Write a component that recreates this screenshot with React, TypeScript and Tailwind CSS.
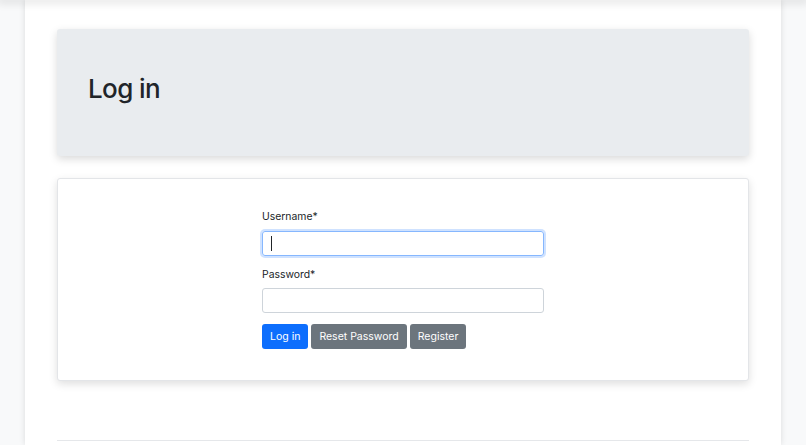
const font = { fontFamily: "Inter, 'Noto Sans', sans-serif" };

export default function App() {
  return (
    <div className="min-h-[445px] bg-[#f8f9fa] relative overflow-hidden" style={font}>
      {/* shadow of the navbar above the fold */}
      <div className="absolute top-0 left-0 right-0 h-0 shadow-[0_0_8px_3px_rgba(0,0,0,0.12)] z-10" />

      <div className="mx-[25px] min-h-[445px] bg-white shadow-[0_0_6px_rgba(0,0,0,0.12)] px-[32px] pt-[29px]">
        <div className="h-[127px] bg-[#e9ecef] rounded-[3px] shadow-[0_3px_8px_rgba(0,0,0,0.15)] flex items-center px-[31px] pb-[8px]">
          <h1 className="text-[26px] font-medium text-[#212529] tracking-[-0.6px] leading-none">Log in</h1>
        </div>

        <div className="mt-[22px] h-[203px] bg-white border border-[#e3e5e8] rounded-[3px] shadow-[0_3px_9px_rgba(0,0,0,0.13)] flex justify-center pt-[30px]">
          <form className="w-[282px] text-[10.4px] text-[#212529]">
            <label className="block leading-[16px] mb-[6px]">Username*</label>
            <div className="h-[25px] rounded-[3px] border border-[#86b7fe] shadow-[0_0_0_2px_rgba(13,110,253,0.2)] flex items-center px-[8px]">
              <span className="w-px h-[15px] bg-[#212529]" />
            </div>

            <label className="block leading-[16px] mt-[11px] mb-[5px]">Password*</label>
            <div className="h-[25px] rounded-[3px] border border-[#ced4da]" />

            <div className="mt-[11px] flex gap-[3px]">
              <button type="button" className="h-[25px] px-[8px] rounded-[3px] bg-[#0d6efd] text-white text-[10.5px]">Log in</button>
              <button type="button" className="h-[25px] px-[8px] rounded-[3px] bg-[#6c757d] text-white text-[10.5px]">Reset Password</button>
              <button type="button" className="h-[25px] px-[8px] rounded-[3px] bg-[#6c757d] text-white text-[10.5px]">Register</button>
            </div>
          </form>
        </div>

        <hr className="mt-[59px] border-t border-[#e5e7ea]" />
      </div>
    </div>
  );
}
